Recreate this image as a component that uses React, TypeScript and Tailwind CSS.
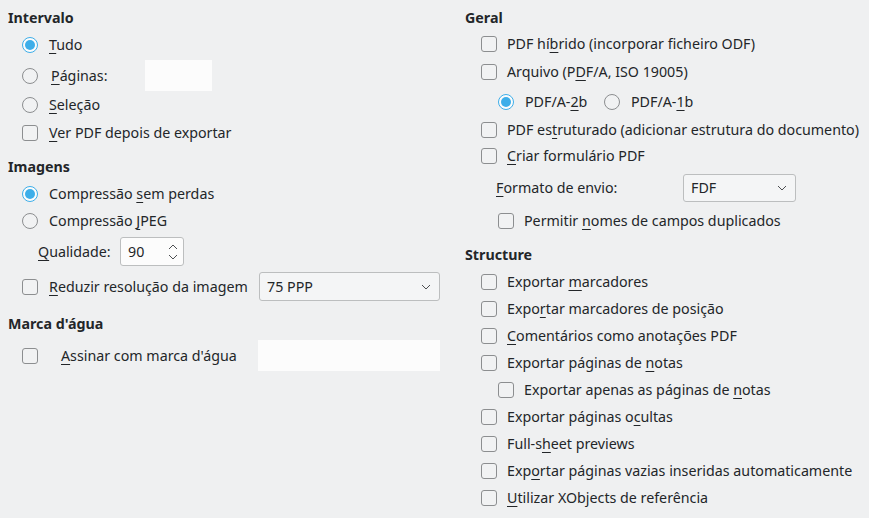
import React from "react";

const U = ({ children }: { children: React.ReactNode }) => (
  <span className="underline decoration-1 underline-offset-[3px]">{children}</span>
);

const Check = () => (
  <span className="inline-block w-[16px] h-[16px] shrink-0 rounded-[3px] border border-[#8c8e90] bg-[#f1f2f3]" />
);

const Radio = ({ on }: { on?: boolean }) =>
  on ? (
    <span className="flex items-center justify-center w-[16px] h-[16px] shrink-0 rounded-full border border-[#3daee9] bg-[#fcfcfc]">
      <span className="w-[10px] h-[10px] rounded-full bg-[#3daee9]" />
    </span>
  ) : (
    <span className="inline-block w-[16px] h-[16px] shrink-0 rounded-full border border-[#8c8e90] bg-[#f1f2f3]" />
  );

const Chevron = () => (
  <svg width="10" height="6" viewBox="0 0 10 6" className="shrink-0">
    <path d="M1 1 L5 5 L9 1" fill="none" stroke="#4d4f52" strokeWidth="1" />
  </svg>
);

const Heading = ({ children, className = "" }: { children: React.ReactNode; className?: string }) => (
  <div className={`h-[20px] flex items-center font-bold ${className}`}>{children}</div>
);

const CheckRow = ({ children, h = 27, className = "" }: { children: React.ReactNode; h?: number; className?: string }) => (
  <div className={`flex items-center gap-[10px] ${className}`} style={{ height: h }}>
    <Check />
    <span className="whitespace-nowrap">{children}</span>
  </div>
);

export default function App() {
  return (
    <div
      className="w-[869px] h-[518px] bg-[#eff0f1] text-[#232629] text-[14.25px] flex overflow-hidden"
      style={{ fontFamily: '"Noto Sans", "Open Sans", sans-serif' }}
    >
      {/* Left column */}
      <div className="w-[465px] shrink-0 pl-[8px] pt-[8px] flex flex-col">
        <Heading>Intervalo</Heading>
        <div className="pl-[14px] mt-[2px] flex flex-col">
          <div className="h-[30px] flex items-center gap-[11px]">
            <Radio on />
            <span><U>T</U>udo</span>
          </div>
          <div className="h-[31px] flex items-center">
            <Radio />
            <span className="ml-[13px] w-[94px]"><U>P</U>áginas:</span>
            <span className="w-[67px] h-[31px] bg-[#fcfcfc]" />
          </div>
          <div className="h-[28px] flex items-center gap-[11px]">
            <Radio />
            <span><U>S</U>eleção</span>
          </div>
          <div className="h-[27px] flex items-center gap-[11px]">
            <Check />
            <span><U>V</U>er PDF depois de exportar</span>
          </div>
        </div>

        <Heading className="mt-[11px]">Imagens</Heading>
        <div className="pl-[14px] mt-[3px] flex flex-col">
          <div className="h-[28px] flex items-center gap-[11px]">
            <Radio on />
            <span>Compressão <U>s</U>em perdas</span>
          </div>
          <div className="h-[26px] flex items-center gap-[11px]">
            <Radio />
            <span>Compressão <U>J</U>PEG</span>
          </div>
          <div className="h-[29px] mt-[3px] flex items-center pl-[16px]">
            <span className="w-[82px]"><U>Q</U>ualidade:</span>
            <div className="w-[64px] h-[29px] rounded-[3px] border border-[#bcbebf] bg-[#fcfcfc] flex items-center justify-between pl-[7px] pr-[5px]">
              <span>90</span>
              <svg width="10" height="18" viewBox="0 0 10 18">
                <path d="M1 6 L5 2 L9 6" fill="none" stroke="#4d4f52" strokeWidth="1" />
                <path d="M1 12 L5 16 L9 12" fill="none" stroke="#4d4f52" strokeWidth="1" />
              </svg>
            </div>
          </div>
          <div className="h-[29px] mt-[6px] flex items-center">
            <Check />
            <span className="ml-[11px] w-[210px] whitespace-nowrap"><U>R</U>eduzir resolução da imagem</span>
            <div className="w-[181px] h-[29px] rounded-[3px] border border-[#bcbebf] bg-[#f4f5f6] flex items-center justify-between pl-[7px] pr-[8px]">
              <span>75 PPP</span>
              <Chevron />
            </div>
          </div>
        </div>

        <Heading className="mt-[13px]">Marca d'água</Heading>
        <div className="pl-[14px] mt-[6px] flex flex-col">
          <div className="h-[31px] flex items-center">
            <Check />
            <span className="ml-[23px] w-[197px] whitespace-nowrap"><U>A</U>ssinar com marca d'água</span>
            <span className="w-[182px] h-[31px] bg-[#fcfcfc]" />
          </div>
        </div>
      </div>

      {/* Right column */}
      <div className="flex-1 pt-[8px] flex flex-col">
        <Heading>Geral</Heading>
        <div className="pl-[16px] mt-[2px] flex flex-col">
          <CheckRow h={28}>PDF hí<U>b</U>rido (incorporar ficheiro ODF)</CheckRow>
          <CheckRow h={28}>Arquivo (P<U>D</U>F/A, ISO 19005)</CheckRow>
          <div className="h-[29px] mt-[1px] pl-[17px] flex items-center">
            <Radio on />
            <span className="ml-[11px] w-[79px]">PDF/A-<U>2</U>b</span>
            <Radio />
            <span className="ml-[11px]">PDF/A-<U>1</U>b</span>
          </div>
          <CheckRow h={27}>PDF es<U>t</U>ruturado (adicionar estrutura do documento)</CheckRow>
          <CheckRow h={26}><U>C</U>riar formulário PDF</CheckRow>
          <div className="h-[28px] mt-[5px] pl-[15px] flex items-center">
            <span className="w-[187px]"><U>F</U>ormato de envio:</span>
            <div className="w-[113px] h-[28px] rounded-[3px] border border-[#bcbebf] bg-[#f4f5f6] flex items-center justify-between pl-[7px] pr-[8px]">
              <span>FDF</span>
              <Chevron />
            </div>
          </div>
          <CheckRow h={28} className="mt-[5px] pl-[17px]">Permitir <U>n</U>omes de campos duplicados</CheckRow>
        </div>

        <Heading className="mt-[10px]">Structure</Heading>
        <div className="pl-[16px] mt-[3px] flex flex-col">
          <CheckRow>Exportar <U>m</U>arcadores</CheckRow>
          <CheckRow>Expo<U>r</U>tar marcadores de posição</CheckRow>
          <CheckRow><U>C</U>omentários como anotações PDF</CheckRow>
          <CheckRow>Exportar páginas de <U>n</U>otas</CheckRow>
          <CheckRow className="pl-[17px]">Exportar apenas as páginas de <U>n</U>otas</CheckRow>
          <CheckRow>Exportar páginas o<U>c</U>ultas</CheckRow>
          <CheckRow>Full-s<U>h</U>eet previews</CheckRow>
          <CheckRow>Exp<U>o</U>rtar páginas vazias inseridas automaticamente</CheckRow>
          <CheckRow><U>U</U>tilizar XObjects de referência</CheckRow>
        </div>
      </div>
    </div>
  );
}
